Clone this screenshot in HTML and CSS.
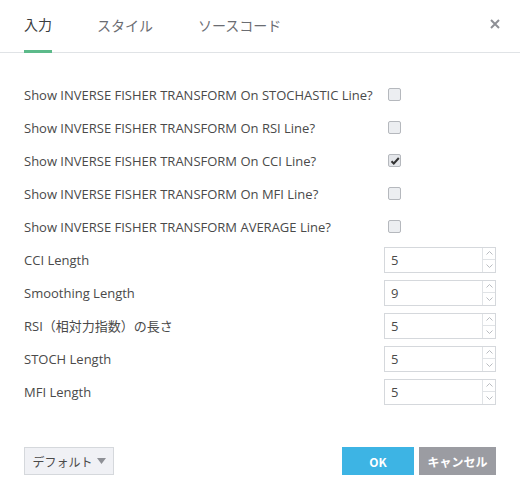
FILE: index.html
```html
<!DOCTYPE html>
<html>
<head>
<meta charset="utf-8">
<link rel="stylesheet" href="styles.css">
</head>
<body>
<div class="dialog">
  <div class="tabs">
    <div class="tab active">入力</div>
    <div class="tab">スタイル</div>
    <div class="tab">ソースコード</div>
    <div class="close">
      <svg width="10" height="10" viewBox="0 0 10 10"><path d="M1 1L9 9M9 1L1 9" stroke="#8e9096" stroke-width="2"/></svg>
    </div>
  </div>
  <div class="content">
    <div class="row"><span class="label">Show INVERSE FISHER TRANSFORM On STOCHASTIC Line?</span><span class="check"></span></div>
    <div class="row"><span class="label">Show INVERSE FISHER TRANSFORM On RSI Line?</span><span class="check"></span></div>
    <div class="row"><span class="label">Show INVERSE FISHER TRANSFORM On CCI Line?</span><span class="check checked"><svg width="10" height="10" viewBox="0 0 10 10"><path d="M1.5 5.2L3.8 7.5L8.8 2" stroke="#333" stroke-width="2" fill="none"/></svg></span></div>
    <div class="row"><span class="label">Show INVERSE FISHER TRANSFORM On MFI Line?</span><span class="check"></span></div>
    <div class="row"><span class="label">Show INVERSE FISHER TRANSFORM AVERAGE Line?</span><span class="check"></span></div>
    <div class="row"><span class="label">CCI Length</span><div class="num"><span class="val">5</span><div class="spin"><span class="up"><svg width="7" height="4" viewBox="0 0 7 4"><path d="M0.5 3.5L3.5 0.5L6.5 3.5" stroke="#b9bcc1" fill="none"/></svg></span><span class="down"><svg width="7" height="4" viewBox="0 0 7 4"><path d="M0.5 0.5L3.5 3.5L6.5 0.5" stroke="#b9bcc1" fill="none"/></svg></span></div></div></div>
    <div class="row"><span class="label">Smoothing Length</span><div class="num"><span class="val">9</span><div class="spin"><span class="up"><svg width="7" height="4" viewBox="0 0 7 4"><path d="M0.5 3.5L3.5 0.5L6.5 3.5" stroke="#b9bcc1" fill="none"/></svg></span><span class="down"><svg width="7" height="4" viewBox="0 0 7 4"><path d="M0.5 0.5L3.5 3.5L6.5 0.5" stroke="#b9bcc1" fill="none"/></svg></span></div></div></div>
    <div class="row"><span class="label">RSI（相対力指数）の長さ</span><div class="num"><span class="val">5</span><div class="spin"><span class="up"><svg width="7" height="4" viewBox="0 0 7 4"><path d="M0.5 3.5L3.5 0.5L6.5 3.5" stroke="#b9bcc1" fill="none"/></svg></span><span class="down"><svg width="7" height="4" viewBox="0 0 7 4"><path d="M0.5 0.5L3.5 3.5L6.5 0.5" stroke="#b9bcc1" fill="none"/></svg></span></div></div></div>
    <div class="row"><span class="label">STOCH Length</span><div class="num"><span class="val">5</span><div class="spin"><span class="up"><svg width="7" height="4" viewBox="0 0 7 4"><path d="M0.5 3.5L3.5 0.5L6.5 3.5" stroke="#b9bcc1" fill="none"/></svg></span><span class="down"><svg width="7" height="4" viewBox="0 0 7 4"><path d="M0.5 0.5L3.5 3.5L6.5 0.5" stroke="#b9bcc1" fill="none"/></svg></span></div></div></div>
    <div class="row"><span class="label">MFI Length</span><div class="num"><span class="val">5</span><div class="spin"><span class="up"><svg width="7" height="4" viewBox="0 0 7 4"><path d="M0.5 3.5L3.5 0.5L6.5 3.5" stroke="#b9bcc1" fill="none"/></svg></span><span class="down"><svg width="7" height="4" viewBox="0 0 7 4"><path d="M0.5 0.5L3.5 3.5L6.5 0.5" stroke="#b9bcc1" fill="none"/></svg></span></div></div></div>
  </div>
  <div class="footer">
    <div class="defaults">デフォルト <svg width="9" height="6" viewBox="0 0 9 6"><path d="M0 0H9L4.5 6Z" fill="#8e9096"/></svg></div>
    <div class="spacer"></div>
    <div class="btn ok">OK</div>
    <div class="btn cancel">キャンセル</div>
  </div>
</div>
</body>
</html>
```
FILE: styles.css
```css
html, body {
  margin: 0;
  padding: 0;
  background: #fff;
}
body {
  font-family: "Open Sans", "Noto Sans CJK JP", sans-serif;
  color: #4a4a4a;
  font-size: 12px;
}
.dialog {
  width: 520px;
  height: 500px;
  display: flex;
  flex-direction: column;
}
.tabs {
  display: flex;
  align-items: stretch;
  height: 52px;
  border-bottom: 1px solid #e0e3e6;
  padding-left: 24px;
  box-sizing: content-box;
}
.tab {
  font-family: "Noto Sans CJK JP", sans-serif;
  font-size: 14px;
  color: #6b6d72;
  margin-right: 45px;
  display: flex;
  align-items: center;
  padding-bottom: 2px;
  border-bottom: 2px solid transparent;
  margin-bottom: -1px;
}
.tab.active {
  color: #3b3d40;
  border-bottom: 3px solid #5cba8a;
}
.close {
  margin-left: auto;
  margin-right: 20px;
  display: flex;
  align-items: center;
  padding-bottom: 4px;
}
.content {
  padding: 25px 24px 0 24px;
}
.row {
  display: grid;
  grid-template-columns: 360px 112px;
  align-items: center;
  height: 33px;
}
.label {
  font-size: 13px;
  white-space: nowrap;
}
.check {
  width: 11px;
  height: 11px;
  margin-left: 4px;
  border: 1px solid #b5b8bd;
  border-radius: 2px;
  background: #eceef1;
  display: flex;
  align-items: center;
  justify-content: center;
}
.check.checked {
  background: #e4e6ea;
}
.num {
  display: flex;
  height: 26px;
  border: 1px solid #d5d8dc;
  box-sizing: border-box;
}
.val {
  flex: 1;
  font-size: 13px;
  padding-left: 6px;
  line-height: 24px;
  color: #4a4a4a;
}
.spin {
  width: 12px;
  border-left: 1px solid #e0e3e6;
  display: flex;
  flex-direction: column;
}
.spin span {
  flex: 1;
  display: flex;
  align-items: center;
  justify-content: center;
}
.spin .up {
  border-bottom: 1px solid #e0e3e6;
}
.footer {
  display: flex;
  padding: 39px 24px 0 24px;
  gap: 5px;
}
.spacer {
  flex: 1;
}
.defaults {
  width: 90px;
  height: 28px;
  box-sizing: border-box;
  border: 1px solid #d5d8dc;
  background: #f0f1f5;
  font-family: "Noto Sans CJK JP", sans-serif;
  font-size: 12px;
  color: #4a4a4a;
  display: flex;
  align-items: center;
  justify-content: center;
  gap: 4px;
}
.btn {
  height: 28px;
  display: flex;
  align-items: center;
  justify-content: center;
  color: #fff;
  font-weight: bold;
  font-size: 12px;
  font-family: "Noto Sans CJK JP", sans-serif;
}
.ok {
  width: 72px;
  background: #3db4e4;
}
.cancel {
  width: 77px;
  background: #9b9ca2;
}
```
